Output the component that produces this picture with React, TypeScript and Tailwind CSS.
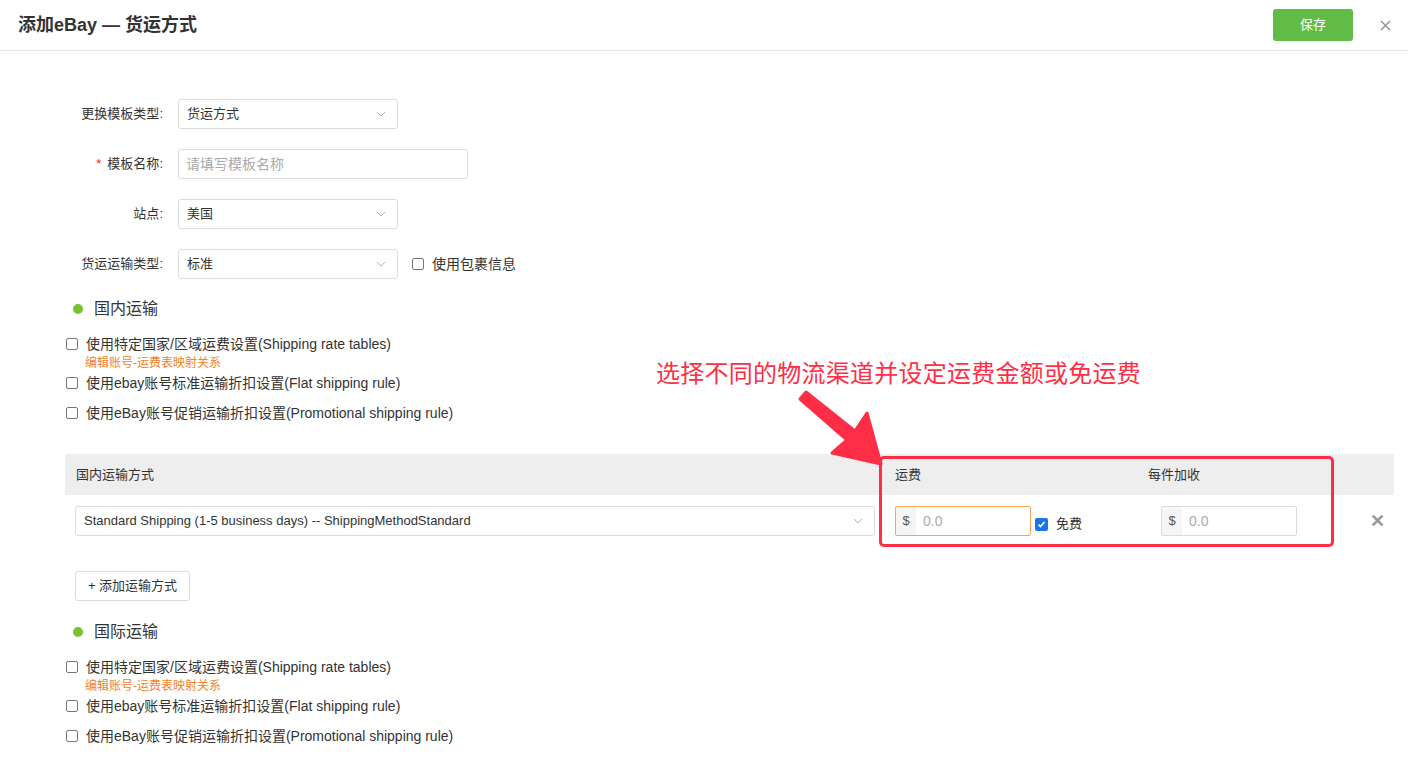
import React from "react";

const font = "font-['Liberation_Sans','Noto_Sans_CJK_SC',sans-serif]";

function Chevron() {
  return (
    <svg width="10" height="6" viewBox="0 0 10 6" className="shrink-0">
      <path d="M1 1l4 4 4-4" fill="none" stroke="#b5b5b5" strokeWidth="1" />
    </svg>
  );
}

function Select({ value, width }: { value: string; width: string }) {
  return (
    <div
      className={`${width} flex h-[30px] items-center justify-between rounded-[3px] border border-[#dcdcdc] bg-white pl-[8px] pr-[11px] text-[13px] text-[#333]`}
    >
      <span>{value}</span>
      <Chevron />
    </div>
  );
}

function Box({ checked = false }: { checked?: boolean }) {
  if (checked) {
    return (
      <span className="flex h-[13px] w-[13px] shrink-0 items-center justify-center rounded-[2px] bg-[#1b74e8]">
        <svg width="9" height="9" viewBox="0 0 9 9">
          <path d="M1.5 4.6l2 2 4-4.6" fill="none" stroke="white" strokeWidth="1.7" />
        </svg>
      </span>
    );
  }
  return <span className="h-[12px] w-[12px] shrink-0 rounded-[2px] border border-[#777] bg-white" />;
}

function Row({ label, required, children }: { label: string; required?: boolean; children: React.ReactNode }) {
  return (
    <div className="mb-[20px] flex h-[30px] items-center">
      <div className="mr-[15px] w-[98px] text-right text-[13px] text-[#333]">
        {required && <span className="mr-[6px] text-[#f5222d]">*</span>}
        {label}:
      </div>
      {children}
    </div>
  );
}

function Section({ title }: { title: string }) {
  return (
    <>
      <div className="flex h-[20px] items-center">
        <span className="ml-[8px] h-[10px] w-[10px] rounded-full bg-[#7cc034]" />
        <span className="ml-[11px] text-[16px] text-[#333]">{title}</span>
      </div>
      <div className="mt-[15px] pl-[1px] text-[14px] text-[#333]">
        <div className="flex h-[20px] items-center gap-[8px]">
          <Box />
          <span>使用特定国家/区域运费设置(Shipping rate tables)</span>
        </div>
        <div className="h-[18px] pl-[19px] text-[12px] leading-[18px] text-[#f5821f]">编辑账号-运费表映射关系</div>
        <div className="flex h-[22px] items-center gap-[8px]">
          <Box />
          <span>使用ebay账号标准运输折扣设置(Flat shipping rule)</span>
        </div>
        <div className="mt-[8px] flex h-[22px] items-center gap-[8px]">
          <Box />
          <span>使用eBay账号促销运输折扣设置(Promotional shipping rule)</span>
        </div>
      </div>
    </>
  );
}

function Money({ focus }: { focus?: boolean }) {
  return (
    <div
      className={`flex h-[30px] w-[136px] overflow-hidden rounded-[2px] border ${focus ? "border-[#f5a55a]" : "border-[#dcdcdc]"} bg-white text-[14px]`}
    >
      <span className="flex w-[20px] items-center justify-center bg-[#f5f5f5] text-[13px] text-[#555]">$</span>
      <span className="flex items-center pl-[7px] text-[#aaa]">0.0</span>
    </div>
  );
}

export default function App() {
  return (
    <div className={`relative h-[775px] w-[1408px] overflow-hidden bg-white ${font}`}>
      <header className="flex h-[51px] items-center justify-between border-b border-[#e8e8e8] pl-[18px] pr-[17px]">
        <h1 className="text-[18px] font-bold text-[#333]">添加eBay — 货运方式</h1>
        <div className="flex items-center">
          <button className="h-[32px] w-[80px] rounded-[3px] bg-[#62bb46] text-[13px] text-white">保存</button>
          <svg className="ml-[27px]" width="11" height="11" viewBox="0 0 11 11">
            <path d="M1 1l9 9M10 1l-9 9" stroke="#999" strokeWidth="1.6" />
          </svg>
        </div>
      </header>

      <main className="pl-[65px] pr-[14px] pt-[48px]">
        <Row label="更换模板类型">
          <Select value="货运方式" width="w-[220px]" />
        </Row>
        <Row label="模板名称" required>
          <div className="flex h-[30px] w-[290px] items-center rounded-[3px] border border-[#dcdcdc] pl-[7px] text-[14px] text-[#aaa]">
            请填写模板名称
          </div>
        </Row>
        <Row label="站点">
          <Select value="美国" width="w-[220px]" />
        </Row>
        <Row label="货运运输类型">
          <Select value="标准" width="w-[220px]" />
          <div className="ml-[14px] flex items-center gap-[8px] text-[14px] text-[#333]">
            <Box />
            <span>使用包裹信息</span>
          </div>
        </Row>

        <Section title="国内运输" />

        <div className="relative mt-[30px]">
          <div className="flex h-[41px] items-center bg-[#eeeeee] pl-[11px] text-[13px] text-[#333]">
            <span className="w-[819px]">国内运输方式</span>
            <span className="w-[253px]">运费</span>
            <span>每件加收</span>
          </div>
          <div className="flex items-center pl-[10px] pt-[11px]">
            <Select value="Standard Shipping (1-5 business days) -- ShippingMethodStandard" width="w-[800px]" />
            <div className="ml-[20px]">
              <Money focus />
            </div>
            <div className="ml-[4px] mt-[6px] flex items-center gap-[8px] text-[13px] text-[#333]">
              <Box checked />
              <span>免费</span>
            </div>
            <div className="ml-[79px]">
              <Money />
            </div>
            <span className="ml-[73px] text-[18px] font-bold leading-none text-[#999]">✕</span>
          </div>
          <div className="absolute left-[814px] top-[2px] h-[91px] w-[455px] rounded-[5px] border-[3px] border-[#fd2e45]" />
        </div>

        <button className="ml-[10px] mt-[35px] h-[30px] w-[115px] rounded-[3px] border border-[#dcdcdc] bg-white text-[13px] text-[#333]">
          + 添加运输方式
        </button>

        <div className="mt-[21px]">
          <Section title="国际运输" />
        </div>
      </main>

      <div className="absolute left-[656px] top-[358px] text-[24px] leading-[32px] tracking-[0.25px] text-[#fd2e45]">
        选择不同的物流渠道并设定运费金额或免运费
      </div>
      <svg className="absolute left-[790px] top-[385px]" width="100" height="85" viewBox="790 385 100 85">
        <polygon
          points="881,464 832,453 847,440 800,399 806,392 855,431 867,413"
          fill="#fd2e45"
          stroke="#fd2e45"
          strokeWidth="3"
          strokeLinejoin="round"
        />
      </svg>
    </div>
  );
}
